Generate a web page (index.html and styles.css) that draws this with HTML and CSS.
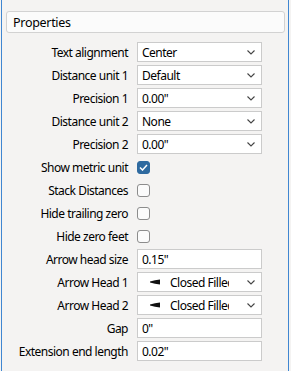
FILE: index.html
```html
<!DOCTYPE html>
<html lang="en">
<head>
    <meta charset="UTF-8">
    <title>Properties</title>
    <link rel="stylesheet" href="styles.css">
</head>
<body>
<div class="panel">
    <div class="header">Properties</div>
    <div class="form">
        <label>Text alignment</label>
        <div class="field select"><span>Center</span><svg class="chev" width="8" height="5" viewBox="0 0 8 5"><path d="M0.5 0.5 L4 4 L7.5 0.5" fill="none" stroke="#444" stroke-width="1.1"/></svg></div>

        <label>Distance unit 1</label>
        <div class="field select"><span>Default</span><svg class="chev" width="8" height="5" viewBox="0 0 8 5"><path d="M0.5 0.5 L4 4 L7.5 0.5" fill="none" stroke="#444" stroke-width="1.1"/></svg></div>

        <label>Precision 1</label>
        <div class="field select"><span>0.00"</span><svg class="chev" width="8" height="5" viewBox="0 0 8 5"><path d="M0.5 0.5 L4 4 L7.5 0.5" fill="none" stroke="#444" stroke-width="1.1"/></svg></div>

        <label>Distance unit 2</label>
        <div class="field select"><span>None</span><svg class="chev" width="8" height="5" viewBox="0 0 8 5"><path d="M0.5 0.5 L4 4 L7.5 0.5" fill="none" stroke="#444" stroke-width="1.1"/></svg></div>

        <label>Precision 2</label>
        <div class="field select"><span>0.00"</span><svg class="chev" width="8" height="5" viewBox="0 0 8 5"><path d="M0.5 0.5 L4 4 L7.5 0.5" fill="none" stroke="#444" stroke-width="1.1"/></svg></div>

        <label>Show metric unit</label>
        <div class="check-cell"><div class="check checked"><svg width="9" height="7" viewBox="0 0 9 7"><path d="M1 3.5 L3.5 6 L8 1" fill="none" stroke="#fff" stroke-width="1.5"/></svg></div></div>

        <label>Stack Distances</label>
        <div class="check-cell"><div class="check"></div></div>

        <label>Hide trailing zero</label>
        <div class="check-cell"><div class="check"></div></div>

        <label>Hide zero feet</label>
        <div class="check-cell"><div class="check"></div></div>

        <label>Arrow head size</label>
        <div class="field"><span>0.15"</span></div>

        <label>Arrow Head 1</label>
        <div class="field select"><svg class="arrow" width="10" height="6" viewBox="0 0 10 6"><path d="M0 2.4 L5 1.2 L10 0.5 L10 5.5 L5 4.8 L0 3.6 Z" fill="#111"/></svg><span class="clip">Closed Filled</span><svg class="chev" width="8" height="5" viewBox="0 0 8 5"><path d="M0.5 0.5 L4 4 L7.5 0.5" fill="none" stroke="#444" stroke-width="1.1"/></svg></div>

        <label>Arrow Head 2</label>
        <div class="field select"><svg class="arrow" width="10" height="6" viewBox="0 0 10 6"><path d="M0 2.4 L5 1.2 L10 0.5 L10 5.5 L5 4.8 L0 3.6 Z" fill="#111"/></svg><span class="clip">Closed Filled</span><svg class="chev" width="8" height="5" viewBox="0 0 8 5"><path d="M0.5 0.5 L4 4 L7.5 0.5" fill="none" stroke="#444" stroke-width="1.1"/></svg></div>

        <label>Gap</label>
        <div class="field"><span>0"</span></div>

        <label>Extension end length</label>
        <div class="field"><span>0.02"</span></div>
    </div>
</div>
</body>
</html>
```
FILE: styles.css
```css
/*Page*/
body {
    margin: 0;
    padding: 0;
    background-color: #f4f3f2;
    font-family: "Noto Sans", "Open Sans", sans-serif;
    font-size: 12px;
    letter-spacing: -0.5px;
    color: #000;
}

.panel {
    margin-left: 1px;
    height: 371px;
    box-sizing: border-box;
    width: 288px;
    border-left: 1px solid #3f86d1;
    border-right: 1px solid #3f86d1;
    padding-top: 11px;
}

/*Header*/
.header {
    margin: 0 3px 9px 4px;
    height: 22px;
    box-sizing: border-box;
    border: 1px solid #d2d2d2;
    border-radius: 3px;
    background-color: #fbfbfb;
    padding-left: 6px;
    padding-top: 1px;
    font-size: 12.5px;
    letter-spacing: -0.3px;
    display: flex;
    align-items: center;
}

/*Form*/
.form {
    display: grid;
    grid-template-columns: 126px 125px;
    grid-auto-rows: 20px;
    column-gap: 9px;
    row-gap: 3px;
}

.form label {
    display: flex;
    align-items: center;
    justify-content: flex-end;
    white-space: nowrap;
}

.field {
    display: flex;
    align-items: center;
    box-sizing: border-box;
    border: 1px solid #cbcbcb;
    background-color: #fff;
    padding-left: 4px;
    overflow: hidden;
}

.select span {
    flex: 1;
}

.chev {
    margin: 1px 6px 0 auto;
    flex-shrink: 0;
}

.arrow {
    margin-left: 8px;
    margin-right: 10px;
    flex-shrink: 0;
}

.select .clip {
    flex: none;
    white-space: nowrap;
    overflow: hidden;
    width: 59px;
}

.check-cell {
    display: flex;
    align-items: center;
}

.check {
    width: 13px;
    height: 13px;
    box-sizing: border-box;
    border: 1px solid #8c8c8c;
    border-radius: 3px;
    background-color: #fbfbfb;
    display: flex;
    align-items: center;
    justify-content: center;
}

.check.checked {
    border-color: #2e6aa0;
    background-color: #2e6aa0;
}
```
